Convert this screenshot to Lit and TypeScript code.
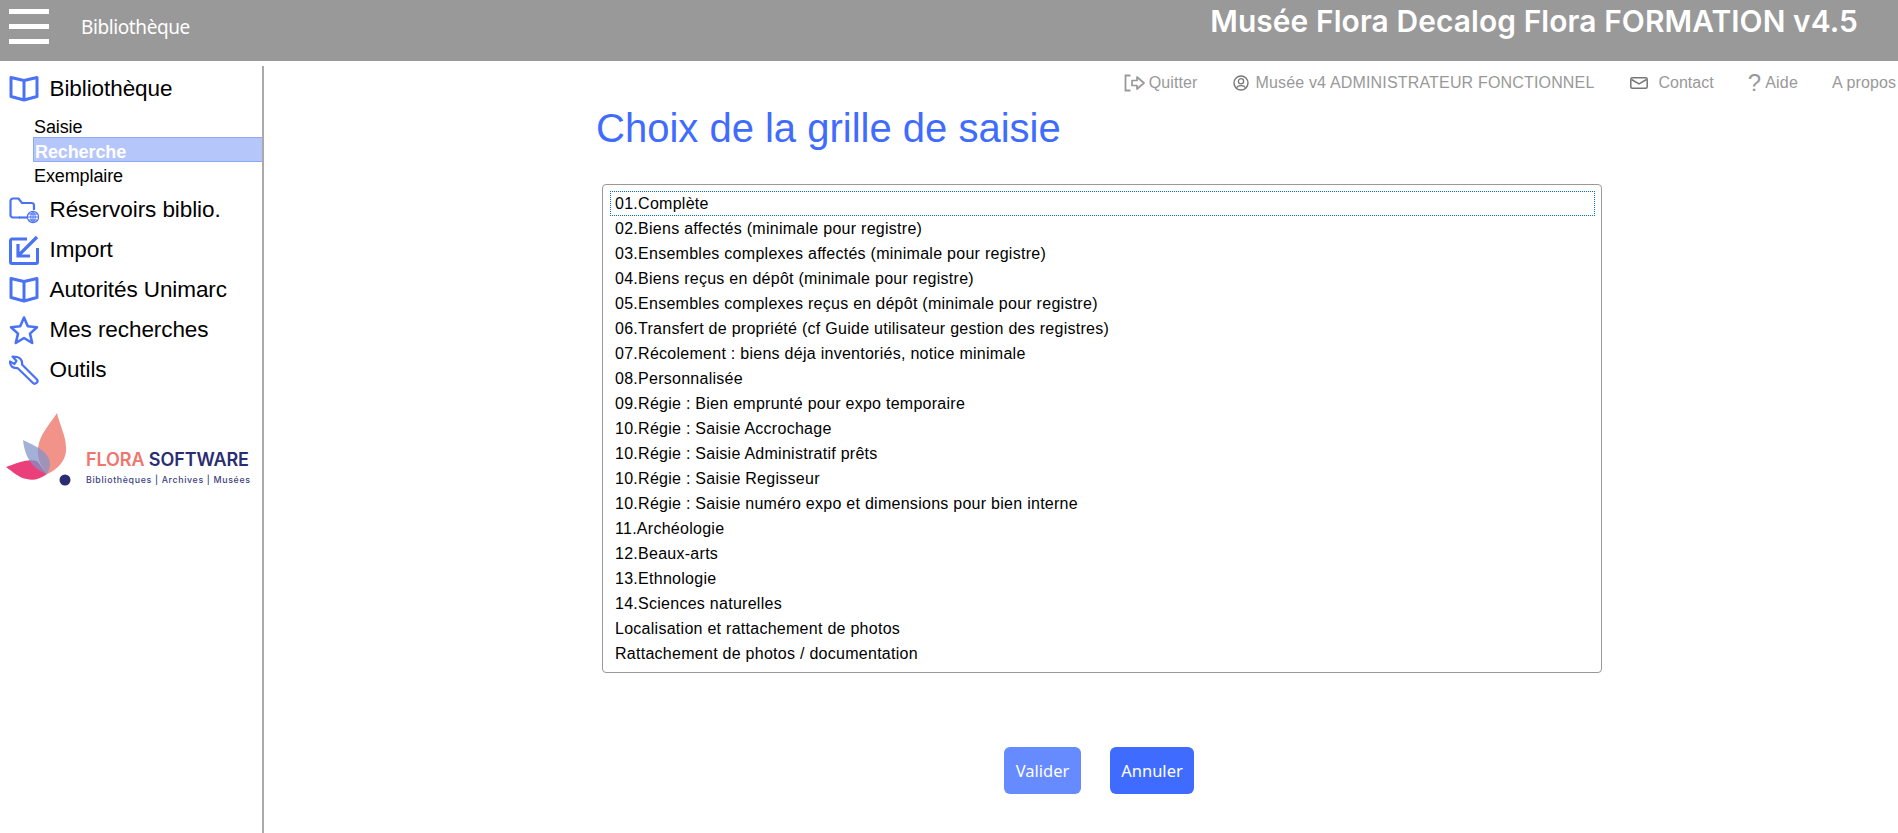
import { LitElement, html, css, svg } from "lit";
import { customElement } from "lit/decorators.js";

const book = svg`<path d="M2 3.5 L2 22.5 L15 26 L28 22.5 L28 3.5 L15 6.5 Z M15 6.5 L15 26" fill="none" stroke="#4a72f5" stroke-width="3" stroke-linejoin="round"/>`;
const folder = svg`<path d="M11 22.5 H4 a2.5 2.5 0 0 1 -2.5 -2.5 V6 a2.5 2.5 0 0 1 2.5 -2.5 H9.5 L13 8 H22.5 a2.5 2.5 0 0 1 2.5 2.5 V15" fill="none" stroke="#4a72f5" stroke-width="2.2"/><path d="M10 22.5 H20" stroke="#4a72f5" stroke-width="2.2"/><circle cx="24" cy="22" r="5.6" fill="#fff" stroke="#4a72f5" stroke-width="1.2"/><path d="M18.5 22 H29.5 M24 16.5 V27.5 M19.5 19 H28.5 M19.5 25 H28.5 M24 16.5 C21 19.5 21 24.5 24 27.5 C27 24.5 27 19.5 24 16.5" fill="none" stroke="#4a72f5" stroke-width="1"/>`;
const imp = svg`<path d="M18 4 H3 a1.5 1.5 0 0 0 -1.5 1.5 V27 a1.5 1.5 0 0 0 1.5 1.5 H27 a1.5 1.5 0 0 0 1.5 -1.5 V13" fill="none" stroke="#4a72f5" stroke-width="3"/><path d="M28 2 L9 21 M9 9 V21 H21" fill="none" stroke="#4a72f5" stroke-width="3.2"/>`;
const star = svg`<path d="M15 2.5 L18.8 11.2 L28 12.2 L21 18.6 L23.2 28 L15 23 L6.8 28 L9 18.6 L2 12.2 L11.2 11.2 Z" fill="none" stroke="#4a72f5" stroke-width="2.6" stroke-linejoin="round"/>`;
const wrench = svg`<path d="M8 2 L3.5 1.5 L7.5 6 L5.5 9 L1 6.5 C1 11 3.5 13.5 8.5 13 L24 28 C26 30 30 27 28 24.5 L13 9.5 C13.5 5.5 11.5 3 8 2 Z" fill="none" stroke="#4a72f5" stroke-width="2.2" stroke-linejoin="round"/>`;

const items: [string, unknown][] = [
  ["Réservoirs biblio.", folder],
  ["Import", imp],
  ["Autorités Unimarc", book],
  ["Mes recherches", star],
  ["Outils", wrench],
];

const options = [
  "01.Complète",
  "02.Biens affectés (minimale pour registre)",
  "03.Ensembles complexes affectés (minimale pour registre)",
  "04.Biens reçus en dépôt (minimale pour registre)",
  "05.Ensembles complexes reçus en dépôt (minimale pour registre)",
  "06.Transfert de propriété (cf Guide utilisateur gestion des registres)",
  "07.Récolement : biens déja inventoriés, notice minimale",
  "08.Personnalisée",
  "09.Régie : Bien emprunté pour expo temporaire",
  "10.Régie : Saisie Accrochage",
  "10.Régie : Saisie Administratif prêts",
  "10.Régie : Saisie Regisseur",
  "10.Régie : Saisie numéro expo et dimensions pour bien interne",
  "11.Archéologie",
  "12.Beaux-arts",
  "13.Ethnologie",
  "14.Sciences naturelles",
  "Localisation et rattachement de photos",
  "Rattachement de photos / documentation",
];

@customElement("app-root")
export class AppRoot extends LitElement {
  static styles = css`
    :host { display: block; height: 833px; overflow: hidden; font-family: "Liberation Sans", Arial, sans-serif; background: #fff; color: #000; }
    .header { height: 61px; background: #999; color: #fff; display: flex; align-items: flex-start; }
    .burger { width: 40px; margin: 9px 0 0 9px; display: flex; flex-direction: column; gap: 10px; }
    .burger i { display: block; height: 5px; background: #fff; }
    .module { margin: 14px 0 0 32px; font: 19px "Noto Sans", sans-serif; letter-spacing: -0.4px; }
    .brand { margin: 3px 40px 0 auto; font: 600 29.9px "Inter", sans-serif; letter-spacing: 0.1px; }
    .body { display: flex; height: 772px; }
    .side { width: 262px; margin-top: 5px; border-right: 2px solid #aaa; flex: none; box-sizing: content-box; }
    .row { display: flex; align-items: center; height: 40px; padding-left: 9px; font-size: 22.5px; letter-spacing: -0.08px; }
    .row svg { width: 30px; height: 30px; flex: none; margin-right: 10.5px; }
    .first { height: 40px; margin-top: 3px; }
    .subs { margin: 6px 0 3px 33px; font-size: 18px; letter-spacing: -0.1px; }
    .subs div { padding-left: 1px; }
    .saisie { height: 22px; line-height: 24px; }
    .on { background: #b5c6fb; border: 1px solid #8ea7f8; border-right: none; height: 25px; line-height: 28px; box-sizing: border-box; color: #fff; font-weight: 700; }
    .exemplaire { height: 25px; line-height: 29px; }
    .logo { margin: 18px 0 0 5px; display: block; }
    .logo text { font-family: "Inter", sans-serif; }
    .main { flex: 1; min-width: 0; display: flex; flex-direction: column; }
    .links { height: 39px; display: flex; justify-content: flex-end; align-items: center; gap: 34px; color: #999; font-size: 16px; padding-right: 2px; margin-top: 2px; white-space: nowrap; }
    .link { display: flex; align-items: center; }
    .link svg { flex: none; display: block; }
    .quit { letter-spacing: .1px; margin-right: 2px; }
    .quit svg { width: 22px; height: 18px; margin-right: 3px; }
    .user { letter-spacing: .17px; margin-right: 1px; }
    .user svg { width: 16px; height: 16px; margin-right: 6px; }
    .mail svg { width: 18px; height: 12px; margin-right: 11px; }
    .qmark { font-size: 24px; margin-right: 4px; line-height: 24px; }
    .help { letter-spacing: .2px; }
    .about { letter-spacing: .1px; }
    .title { margin: 2px 0 0 332px; font-size: 40px; font-weight: 400; color: #3f6cff; line-height: 48px; }
    .list { width: 1000px; height: 489px; box-sizing: border-box; margin: 32px 0 0 338px; border: 1px solid #999; border-radius: 4px; padding: 6px 6px 6px 7px; font-size: 16px; letter-spacing: .27px; }
    .opt { height: 25px; line-height: 25px; padding-left: 5px; white-space: nowrap; }
    .opt:first-child { outline: 1px dotted #0a6fc2; outline-offset: -1px; }
    .buttons { display: flex; gap: 29px; margin: 74px 0 0 740px; }
    .btn { height: 47px; box-sizing: border-box; border-radius: 6px; color: #fff; font: 16.5px "Noto Sans", sans-serif; display: flex; align-items: center; justify-content: center; background: #3f6cff; }
    .v { width: 77px; background: #668aff; }
    .a { width: 84px; }
  `;

  render() {
    return html`
      <div class="header">
        <div class="burger"><i></i><i></i><i></i></div>
        <div class="module">Bibliothèque</div>
        <div class="brand">Musée Flora Decalog Flora FORMATION v4.5</div>
      </div>
      <div class="body">
        <nav class="side">
          <div class="row first"><svg viewBox="0 0 30 30">${book}</svg>Bibliothèque</div>
          <div class="subs">
            <div class="saisie">Saisie</div>
            <div class="on">Recherche</div>
            <div class="exemplaire">Exemplaire</div>
          </div>
          ${items.map(([l, i]) => html`<div class="row"><svg viewBox="0 0 30 30">${i}</svg>${l}</div>`)}
          <svg class="logo" width="250" height="85" viewBox="0 0 250 85">
            <path d="M1 59 C10 56 22 50 32 53 C36 58 38 62 42 66 C35 71 28 73 22 71 C14 70 8 64 1 59 Z" fill="#ea3f78"/>
            <path d="M52 5 C46 15 35 25 33 40 C32 50 36 60 42 66 C52 62 62 52 61 40 C61 28 55 18 52 5 Z" fill="#f29389"/>
            <path d="M18 32 C25 36 45 42 45 56 C45 60 43 64 42 66 C30 62 20 52 18 32 Z" fill="#7f93c9" opacity=".72"/>
            <circle cx="60" cy="72" r="5.5" fill="#2a2d72"/>
            <text x="81" y="58" font-size="18" font-weight="600" fill="#f0756d" textLength="163" lengthAdjust="spacing">FLORA <tspan fill="#2a2d72">SOFTWARE</tspan></text>
            <text x="81" y="75" font-size="8.8" font-weight="500" fill="#3d3f82" textLength="164" lengthAdjust="spacing">Bibliothèques | Archives | Musées</text>
          </svg>
        </nav>
        <main class="main">
          <div class="links">
            <span class="link quit"><svg viewBox="0 0 22 18"><path d="M6.5 1.5 H1.5 V16.5 H6.5" fill="none" stroke="#999" stroke-width="1.8"/><path d="M8 6.5 H13 V3 L20 9 L13 15 V11.5 H8 Z" fill="none" stroke="#999" stroke-width="1.7" stroke-linejoin="round"/></svg>Quitter</span>
            <span class="link user"><svg viewBox="0 0 16 16"><circle cx="8" cy="8" r="7" fill="none" stroke="#777" stroke-width="1.4"/><circle cx="8" cy="6.2" r="2.6" fill="none" stroke="#777" stroke-width="1.3"/><path d="M3.5 12.8 C5 10 11 10 12.5 12.8" fill="none" stroke="#777" stroke-width="1.3"/></svg>Musée v4 ADMINISTRATEUR FONCTIONNEL</span>
            <span class="link mail"><svg viewBox="0 0 18 12"><rect x=".8" y=".8" width="16.4" height="10.4" rx="1.5" fill="none" stroke="#777" stroke-width="1.5"/><path d="M1.5 2.5 L9 7 L16.5 2.5" fill="none" stroke="#777" stroke-width="1.5"/></svg>Contact</span>
            <span class="link help"><span class="qmark">?</span>Aide</span>
            <span class="link about">A propos</span>
          </div>
          <h1 class="title">Choix de la grille de saisie</h1>
          <div class="list">${options.map((o) => html`<div class="opt">${o}</div>`)}</div>
          <div class="buttons"><div class="btn v">Valider</div><div class="btn a">Annuler</div></div>
        </main>
      </div>
    `;
  }
}
